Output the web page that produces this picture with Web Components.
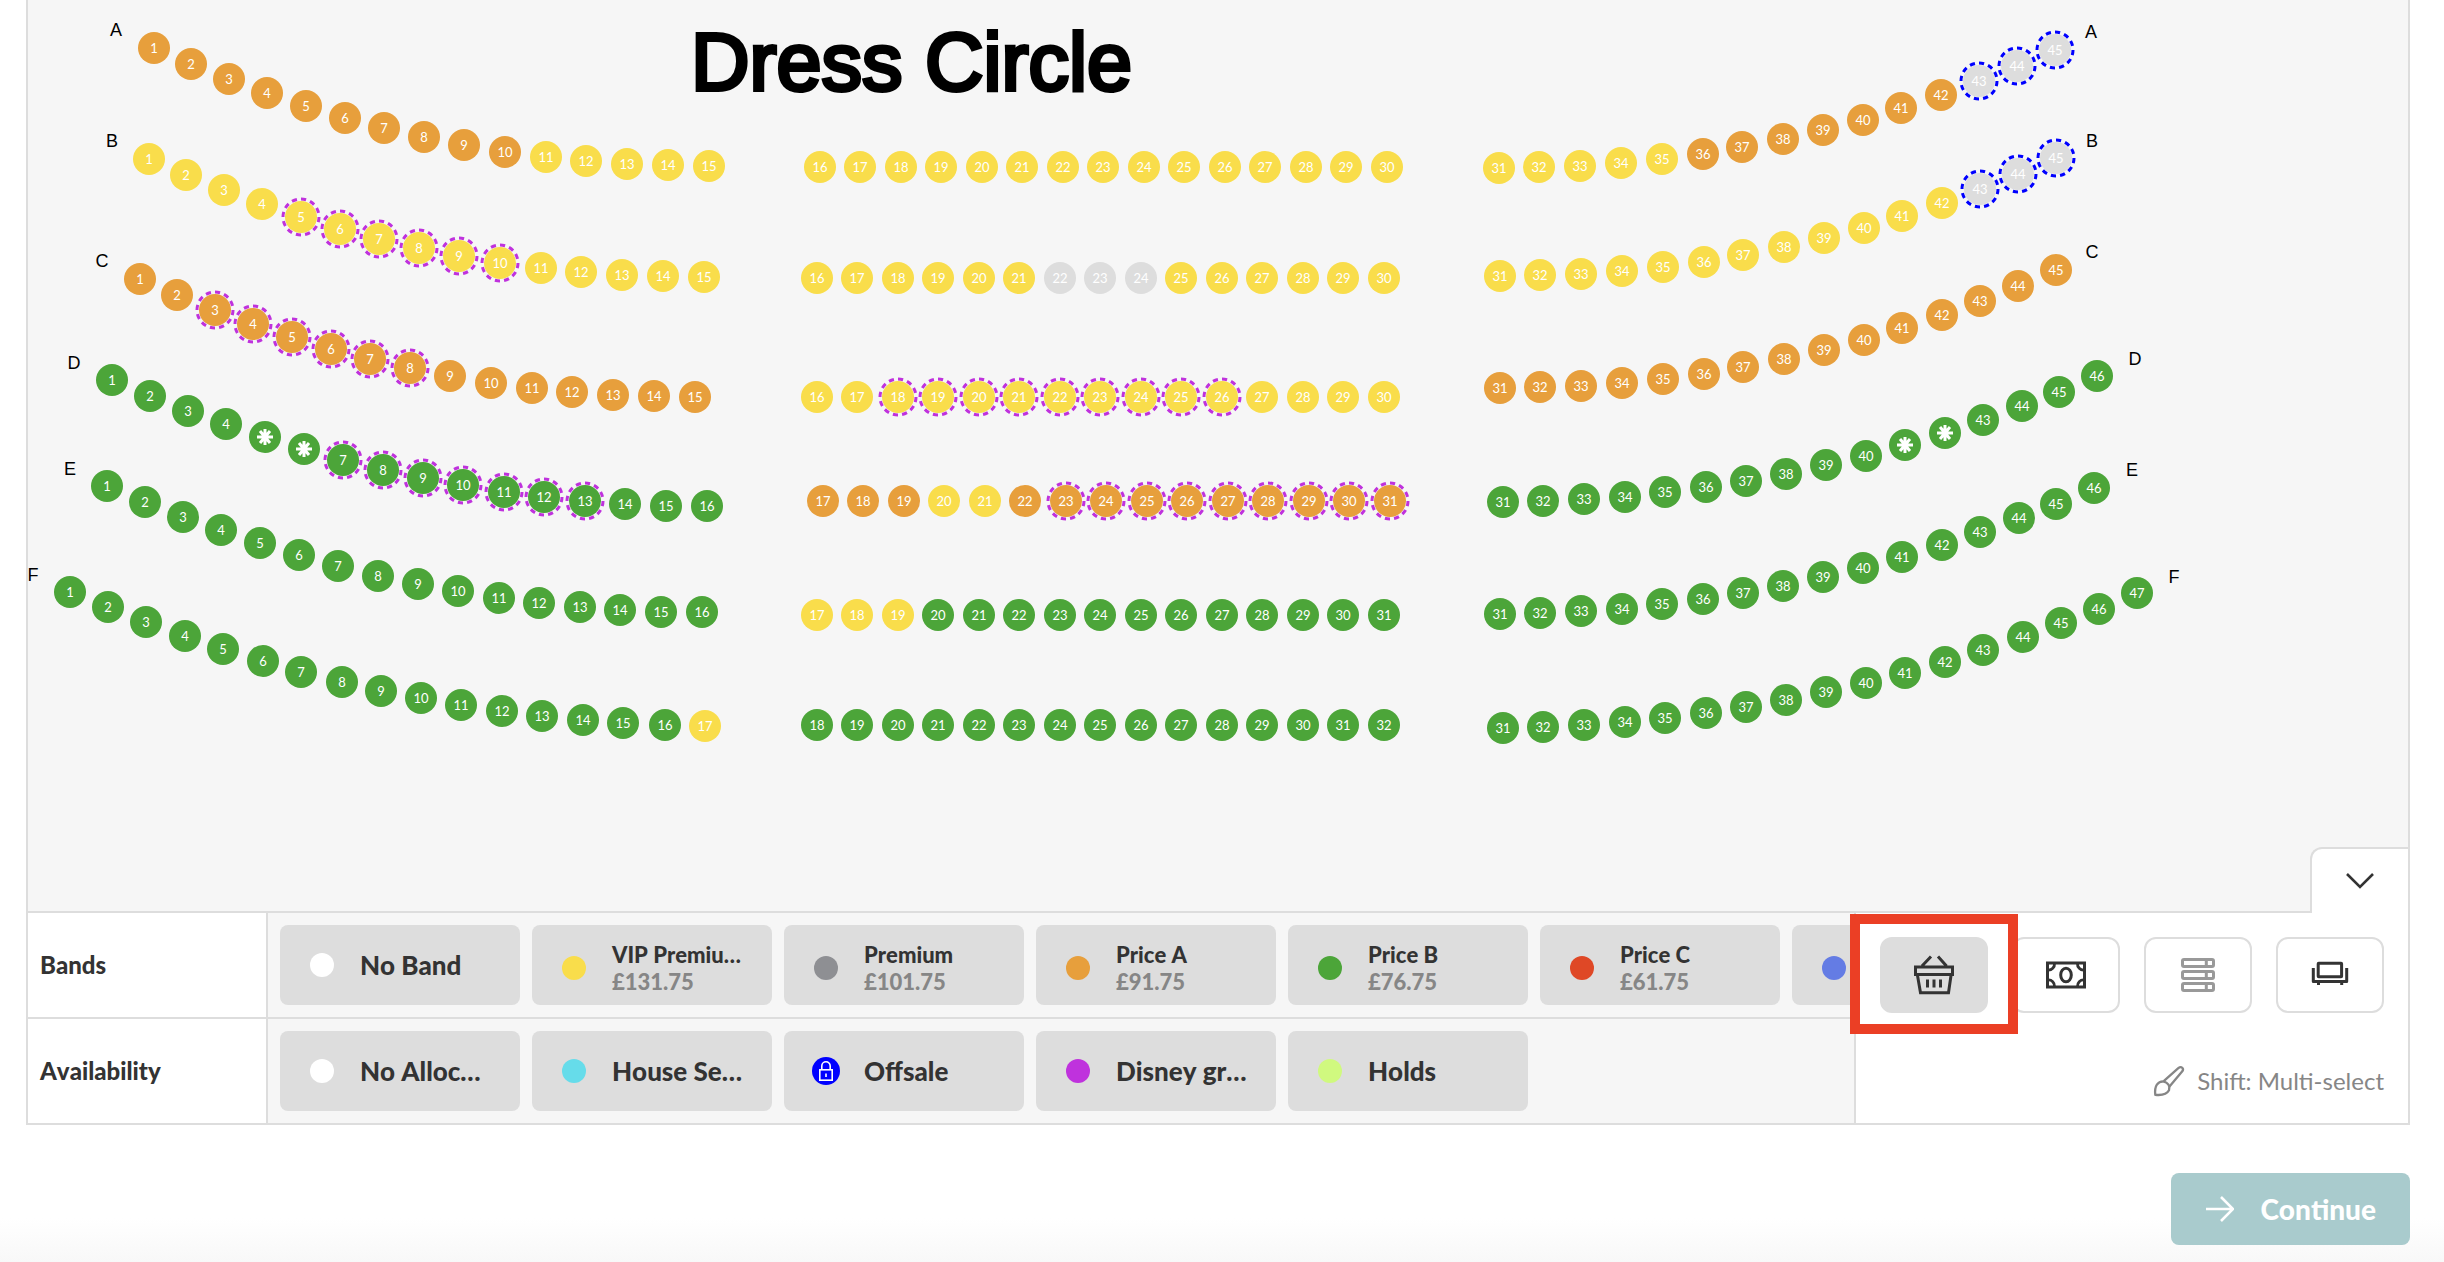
<!DOCTYPE html>
<html lang="en">
<head>
<meta charset="utf-8">
<title>Dress Circle</title>
<style>
  html { background: #fff; }
  body { margin: 0; font-family: Lato, "Liberation Sans", sans-serif; color: #333; }
</style>
</head>
<body>
<seating-page></seating-page>

<script>
const define = (name, html, setup) => {
  const template = document.createElement('template');
  template.innerHTML = html;
  customElements.define(name, class extends HTMLElement {
    connectedCallback() {
      if (this.shadowRoot) return;
      const root = this.attachShadow({ mode: 'open' });
      root.append(template.content.cloneNode(true));
      if (setup) setup(this, root);
    }
  });
};

/* One seat of the plan: band colour, optional allocation ring, number or star */
define('map-seat', `
  <style>
    :host { display: block; position: absolute; width: 32px; height: 32px; transform: translate(-50%, -50%); }
    button { position: relative; width: 32px; height: 32px; padding: 0; border: 0; border-radius: 50%;
      background: var(--band); color: #fff; font: 400 13px/32px Lato, sans-serif; display: flex;
      align-items: center; justify-content: center; cursor: pointer; }
    svg { display: block; flex: none; }
    .ring { position: absolute; left: -4px; top: -4px; overflow: visible; }
  </style>
  <button type="button"></button>`,
  (el, root) => {
    const b = root.querySelector('button');
    const number = el.getAttribute('number');
    if (el.hasAttribute('star')) {
      b.setAttribute('aria-label', 'Seat ' + number);
      b.innerHTML = '<svg width="18" height="18" viewBox="0 0 18 18" stroke="#fff" stroke-width="3" fill="none"><path d="M9 1V17M1 9H17M4 3L14 15M14 3L4 15"/></svg>';
    } else {
      b.textContent = number;
    }
    const ring = el.getAttribute('ring');
    if (ring) b.insertAdjacentHTML('beforeend',
      `<svg class="ring" width="40" height="40" viewBox="0 0 40 40"><circle cx="20" cy="20" r="18" fill="none" stroke="${ring}" stroke-width="3" pathLength="108" stroke-dasharray="5 4"/></svg>`);
  });

/* The plan: rows of seats on a free canvas */
const BAND = { y: '#f9dd4b', o: '#e79f3c', g: '#4ca539', x: '#dddddd' };
const PURPLE = '#bf32dd', BLUE = '#0000ff';
const CURVES = {
  left15: { x: [126,163,201,239,278,317,356,396,436,477,518,558,599,640,681],
            y: [48,64,79,93,106,118,128,137,145,152,157,161,164,165,166] },
  left16: { x: [84,122,160,198,237,276,315,355,395,435,476,516,557,597,638,679],
            y: [380,396,411,424,437,449,460,470,478,485,492,497,501,504,506,506] },
  left17: { x: [42,80,118,157,195,235,273,314,353,393,433,474,514,555,595,637,677],
            y: [592,607,622,636,649,661,672,682,691,698,705,711,716,720,723,725,726] },
  mid:    { x: [0,40,81,121,162,202,243,283,324,364,405,445,486,526,567], y: Array(15).fill(0) },
  right15:{ x: [1471,1511,1552,1593,1634,1675,1714,1755,1795,1835,1873,1913,1951,1989,2027],
            y: [168,167,166,163,159,154,147,139,130,120,108,95,81,66,50] },
  right16:{ x: [1475,1515,1556,1597,1637,1678,1718,1758,1798,1838,1877,1917,1955,1994,2031,2069],
            y: [502,501,499,497,492,487,481,474,465,456,445,433,420,406,392,376] },
  right17:{ x: [1475,1515,1556,1597,1637,1678,1718,1758,1798,1838,1877,1917,1955,1995,2033,2071,2109],
            y: [728,727,725,722,718,713,707,700,692,683,673,662,650,637,623,609,593] }
};
/* curve, dx, dy, first number, band per seat, [ring from, ring to, colour], starred seats */
const BLOCKS = [
  ['left15', 0, 0, 1, 'ooooooooooyyyyy'],
  ['left15', -5, 111, 1, 'yyyyyyyyyyyyyyy', [5, 10, PURPLE]],
  ['left15', -14, 231, 1, 'ooooooooooooooo', [3, 8, PURPLE]],
  ['left16', 0, 0, 1, 'gggggggggggggggg', [7, 13, PURPLE], [5, 6]],
  ['left16', -5, 106, 1, 'gggggggggggggggg'],
  ['left17', 0, 0, 1, 'ggggggggggggggggy'],
  ['mid', 792, 167, 16, 'yyyyyyyyyyyyyyy'],
  ['mid', 789, 278, 16, 'yyyyyyxxxyyyyyy'],
  ['mid', 789, 397, 16, 'yyyyyyyyyyyyyyy', [18, 26, PURPLE]],
  ['mid', 795, 501, 17, 'oooyyoooooooooo', [23, 31, PURPLE]],
  ['mid', 789, 615, 17, 'yyygggggggggggg'],
  ['mid', 789, 725, 18, 'ggggggggggggggg'],
  ['right15', 0, 0, 31, 'yyyyyoooooooxxx', [43, 45, BLUE]],
  ['right15', 1, 108, 31, 'yyyyyyyyyyyyxxx', [43, 45, BLUE]],
  ['right15', 1, 220, 31, 'ooooooooooooooo'],
  ['right16', 0, 0, 31, 'gggggggggggggggg', null, [41, 42]],
  ['right16', -3, 112, 31, 'gggggggggggggggg'],
  ['right17', 0, 0, 31, 'ggggggggggggggggg']
];
const LABELS = [
  ['A', 88, 30], ['B', 84, 141], ['C', 74, 261], ['D', 46, 363], ['E', 42, 469], ['F', 5, 575],
  ['A', 2063, 32], ['B', 2064, 141], ['C', 2064, 252], ['D', 2107, 359], ['E', 2104, 470], ['F', 2146, 577]
];
define('seat-map', `
  <style>
    :host { display: block; position: relative; overflow: hidden; background: #f6f6f6; }
    h1 { position: absolute; left: 663px; top: 16px; margin: 0; font: 400 81px/92px "Liberation Sans", Arial, sans-serif;
      color: #000; -webkit-text-stroke: 4px #000; white-space: nowrap; }
    .row-label { position: absolute; transform: translate(-50%, -50%); font: 400 18px/20px "Liberation Sans", Arial, sans-serif; color: #000; }
  </style>
  <h1>Dress Circle</h1>`,
  (el, root) => {
    for (const [text, x, y] of LABELS) {
      const s = document.createElement('span');
      s.className = 'row-label';
      s.textContent = text;
      s.style.left = x + 'px';
      s.style.top = y + 'px';
      root.append(s);
    }
    for (const [curve, dx, dy, first, bands, ring, stars] of BLOCKS) {
      const c = CURVES[curve];
      [...bands].forEach((band, i) => {
        const n = first + i;
        const seat = document.createElement('map-seat');
        seat.setAttribute('number', n);
        if (ring && n >= ring[0] && n <= ring[1]) seat.setAttribute('ring', ring[2]);
        if (stars && stars.includes(n)) seat.setAttribute('star', '');
        seat.style.cssText = `left:${c.x[i] + dx}px;top:${c.y[i] + dy}px;--band:${BAND[band]}`;
        root.append(seat);
      });
    }
  });

/* A band or availability choice */
define('band-chip', `
  <style>
    :host { display: block; flex: none; width: 240px; }
    button { width: 100%; height: 80px; padding: 0 0 0 26px; border: 0; border-radius: 8px; background: #ddd; color: #333;
      display: flex; align-items: center; gap: 22px; text-align: left; font: 900 26px/32px Lato, sans-serif;
      font-kerning: none; cursor: pointer; white-space: nowrap; }
    .mark { flex: none; width: 32px; display: flex; justify-content: center; }
    .dot { width: 24px; height: 24px; border-radius: 50%; background: var(--dot); }
    :host([price]) button { font-size: 22px; line-height: 27px; padding-top: 6px; }
    .price { display: block; color: #868686; }
    svg { display: block; }
  </style>
  <button type="button"><span class="mark"><span class="dot"></span></span><span class="text"><slot></slot></span></button>`,
  (el, root) => {
    const price = el.getAttribute('price');
    if (price) {
      const p = document.createElement('span');
      p.className = 'price';
      p.textContent = price;
      root.querySelector('.text').append(p);
    }
    if (el.hasAttribute('locked'))
      root.querySelector('.mark').innerHTML = '<svg width="28" height="28" viewBox="0 0 28 28" fill="none" stroke="#fff" stroke-width="1.6"><circle cx="14" cy="14" r="14" fill="#00f" stroke="none"/><rect x="7.8" y="12.8" width="12.4" height="10.4"/><path d="M9.8 12.8V9a4.2 4.2 0 0 1 8.400 0v3.800M14 16.500v3.500"/></svg>';
    if (!el.textContent.trim()) root.querySelector('button').setAttribute('aria-label', 'Next band');
  });

/* Labelled strip of choices */
define('choice-row', `
  <style>
    :host { display: flex; min-width: 0; border-top: 2px solid #ddd; }
    .name { flex: none; box-sizing: border-box; width: 240px; padding-left: 12px; display: flex; align-items: center;
      border-right: 2px solid #ddd; background: #fff; font: 900 24px/32px Lato, sans-serif; font-kerning: none; }
    .list { flex: 1; min-width: 0; display: flex; gap: 12px; padding: 12px; background: #f6f6f6; overflow: hidden; }
  </style>
  <div class="name"></div><div class="list" role="group"><slot></slot></div>`,
  (el, root) => {
    root.querySelector('.name').textContent = el.getAttribute('name');
    root.querySelector('.list').setAttribute('aria-label', el.getAttribute('name'));
  });

define('tool-button', `
  <style>
    :host { display: block; flex: 1; }
    button { box-sizing: border-box; width: 100%; height: 76px; padding: 0; border: 2px solid #ddd; border-radius: 12px;
      background: #fff; color: #333; display: flex; align-items: center; justify-content: center; cursor: pointer; }
    :host([active]) button { background: #ddd; }
  </style>
  <button type="button"><slot></slot></button>`,
  (el, root) => root.querySelector('button').setAttribute('aria-label', el.getAttribute('label')));

define('tool-panel', `
  <style>
    :host { display: flex; flex-direction: column; position: relative; box-sizing: border-box; width: 554px; padding: 24px;
      border-top: 2px solid #ddd; border-left: 2px solid #ddd; background: #fff; }
    .tools { display: flex; gap: 24px; }
    .hint { flex: 1; display: flex; align-items: center; justify-content: flex-end; gap: 12px; padding-top: 50px;
      color: #868686; font: 400 24px/32px Lato, sans-serif; }
    svg { display: block; overflow: visible; }
    .collapse { position: absolute; right: 0; top: -66px; box-sizing: border-box; width: 98px; height: 66px; padding: 0;
      border: 2px solid #ddd; border-width: 2px 0 0 2px; border-radius: 12px 0 0 0; background: #fff; color: #333;
      display: flex; align-items: center; justify-content: center; cursor: pointer; }
    .highlight { position: absolute; left: -6px; top: 1px; box-sizing: border-box; width: 168px; height: 120px;
      border: 10px solid #eb3f25; pointer-events: none; }
  </style>
  <div class="tools">
    <tool-button active label="Basket">
      <svg width="40" height="40" viewBox="0 0 40 40" fill="none" stroke="currentColor" stroke-width="3">
        <path d="M1.500 12H38.500V19.500H1.500ZM3.500 20.500L6.500 37.800H34.500L37 20.500M8 11L17 1.500M32.500 11L24 1.500M13.500 24.500V32.500M20 24.500V32.500M26.500 24.500V32.500"/>
      </svg>
    </tool-button>
    <tool-button label="Price">
      <svg width="40" height="28" viewBox="0 0 40 28" fill="none" stroke="currentColor" stroke-width="3">
        <rect x="1.500" y="2" width="37" height="24"/><ellipse cx="20" cy="14" rx="5.300" ry="6.800"/>
        <path d="M8.500 2.500A6 6 0 0 1 2 9M31.500 2.500A6 6 0 0 0 38 9M8.500 25.500A6 6 0 0 0 2 19M31.500 25.500A6 6 0 0 1 38 19" stroke-width="2.800"/>
      </svg>
    </tool-button>
    <tool-button label="Rows">
      <svg width="34" height="34" viewBox="0 0 34 34" fill="none" stroke="#999" stroke-width="3">
        <rect x="1.500" y="1.500" width="31" height="7" rx="1.500"/><rect x="1.500" y="13.500" width="31" height="7" rx="1.500"/><rect x="1.500" y="25.500" width="31" height="7" rx="1.500"/>
        <path d="M25.300 1V9M25.300 13V21M25.300 25V33"/>
      </svg>
    </tool-button>
    <tool-button label="Seats">
      <svg width="40" height="40" viewBox="0 0 40 40" fill="none" stroke="currentColor" stroke-width="3">
        <rect x="8.200" y="8.300" width="23.400" height="13.400" rx=".5"/>
        <path d="M3.300 13V26.600H36.700V13" stroke-linejoin="round"/><path d="M8.500 27V30M31.700 27V30"/>
      </svg>
    </tool-button>
  </div>
  <div class="hint">
    <svg width="32" height="32" viewBox="0 0 32 32" fill="none" stroke="currentColor" stroke-width="2.300" stroke-linejoin="round">
      <path d="M2.300 29.800C1.200 20.500 5 16.500 10.200 16.300C15 17.500 17.500 21 16 25.300C13.500 30 9 30.500 2.300 29.800Z"/>
      <path d="M10.700 16.200L25.300 3.200C28.500 .5 31.200 3.600 29.300 6.300L16.500 21.500"/>
    </svg>
    <span>Shift: Multi-select</span>
  </div>
  <button class="collapse" type="button" aria-label="Collapse panel">
    <svg width="28" height="16" viewBox="0 0 28 16" fill="none" stroke="currentColor" stroke-width="2.600"><path d="M1 1L14 14L27 1"/></svg>
  </button>
  <div class="highlight"></div>`);

define('seating-page', `
  <style>
    :host { display: flex; flex-direction: column; box-sizing: border-box; min-height: 100vh; padding: 0 34px 17px 26px;
      background: linear-gradient(#fff calc(100% - 44px), #f8f8f8); }
    .board { flex: 1; display: flex; flex-direction: column; border: 2px solid #ddd; border-top: 0; }
    seat-map { flex: 1; min-height: 800px; }
    .controls { display: flex; }
    .rows { flex: 1; min-width: 0; }
    .actions { display: flex; justify-content: flex-end; padding-top: 48px; }
    .continue { height: 72px; padding: 0 34px 0 35px; border: 0; border-radius: 8px; background: #a9cbcd; color: #fff;
      display: flex; align-items: center; gap: 26px; font: 900 28px/36px Lato, sans-serif; font-kerning: none; cursor: pointer; }
    svg { display: block; }
  </style>
  <main class="board">
    <seat-map></seat-map>
    <div class="controls">
      <div class="rows">
        <choice-row name="Bands">
          <band-chip style="--dot:#fff">No Band</band-chip>
          <band-chip style="--dot:#f9dd4b" price="£131.75">VIP Premiu…</band-chip>
          <band-chip style="--dot:#8e8f93" price="£101.75">Premium</band-chip>
          <band-chip style="--dot:#e79f3c" price="£91.75">Price A</band-chip>
          <band-chip style="--dot:#4ca539" price="£76.75">Price B</band-chip>
          <band-chip style="--dot:#df4826" price="£61.75">Price C</band-chip>
          <band-chip style="--dot:#647ce4" price=" "></band-chip>
        </choice-row>
        <choice-row name="Availability">
          <band-chip style="--dot:#fff">No Alloc…</band-chip>
          <band-chip style="--dot:#66dcea">House Se…</band-chip>
          <band-chip locked>Offsale</band-chip>
          <band-chip style="--dot:#bf32dd">Disney gr…</band-chip>
          <band-chip style="--dot:#d0f97f">Holds</band-chip>
        </choice-row>
      </div>
      <tool-panel></tool-panel>
    </div>
  </main>
  <div class="actions">
    <button class="continue" type="button">
      <svg width="28" height="26" viewBox="0 0 28 26" fill="none" stroke="#fff" stroke-width="2.600"><path d="M0 13H26M15 1L27 13L15 25"/></svg>
      <span>Continue</span>
    </button>
  </div>`);
</script>
</body>
</html>
